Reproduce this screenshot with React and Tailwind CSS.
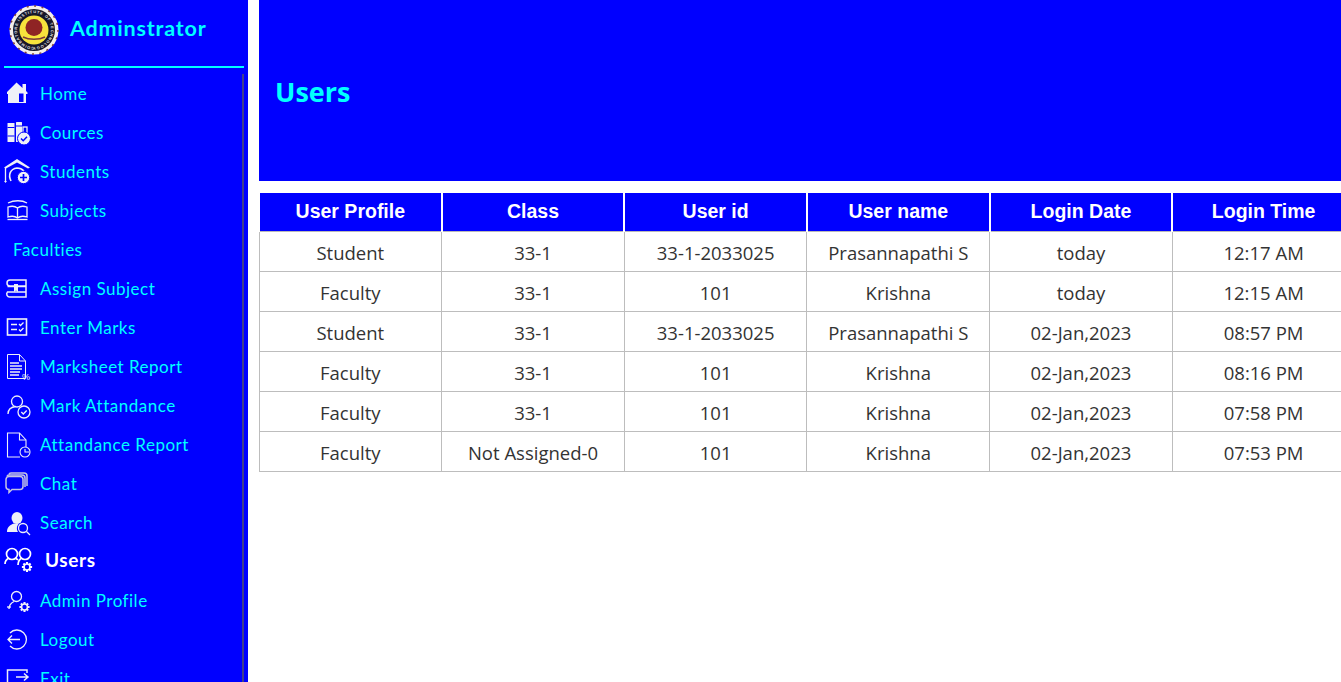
import React from 'react';

const cyan = 'text-[#00ffff]';

// sidebar icons, all drawn on a 28x28 box
const ink = '#eef0f8';
const svgProps = { width: 28, height: 28, viewBox: '0 0 28 28', fill: 'none', stroke: ink, strokeWidth: 1.3 };

const HomeIcon = () => (
  <svg {...svgProps}>
    <path d="M3 12 12.500 2.500l6 5.500V4H22v7l1.500 1.500V14H22v9H4V14H3z" fill={ink} stroke="none" />
    <rect x="15" y="13.500" width="4.500" height="8.500" fill="#0000ff" stroke="none" />
  </svg>
);
const CoursesIcon = () => (
  <svg {...svgProps}>
    <rect x="3.500" y="4" width="7" height="19" rx="0.5" fill={ink} stroke="none" />
    <rect x="12" y="3" width="6" height="20" rx="0.5" fill={ink} stroke="none" />
    <rect x="19" y="8" width="4" height="7" fill="none" />
    <path d="M3.500 8.500h7M3.500 17h7M12 7h6" stroke="#0000ff" strokeWidth="1" />
    <circle cx="20" cy="19.500" r="6.500" fill={ink} stroke="#0000ff" strokeWidth="1" />
    <path d="m17 19.500 2.200 2.200 3.800-4" stroke="#0000ff" strokeWidth="1.500" />
  </svg>
);
const StudentsIcon = () => (
  <svg {...svgProps}>
    <path d="M13 1 0 9.500l2 1 11-6 11 6 2-1z" fill={ink} stroke="none" />
    <path d="M1.500 10v13" />
    <path d="M7 23C4 17 6 11 13 10c3 0 5 1 7 3" strokeWidth="1.600" />
    <path d="M0 23h3l-1.500 2z" fill={ink} stroke="none" />
    <circle cx="19.500" cy="19.500" r="6.200" fill={ink} stroke="#0000ff" strokeWidth="1" />
    <path d="M19.500 16v7M16 19.500h7" stroke="#0000ff" strokeWidth="1.700" />
  </svg>
);
const SubjectsIcon = () => (
  <svg {...svgProps}>
    <path d="M4 6c6-3 14-3 19 0" />
    <path d="M4 10c3-1 7-1 9.500 1 2.500-2 6.500-2 9.500-1v10c-3-1-7-1-9.500 1C11 19 7 19 4 20zM13.500 11v10" />
    <path d="M3.500 22.500h20" />
  </svg>
);
const AssignIcon = () => (
  <svg {...svgProps}>
    <path d="M6 5h16v6H6a3 3 0 0 1 0-6zM6 11h15M3.500 17h18.500v5H6a3 3 0 0 1-2.500-5zM3.500 11.500H22v5.500" strokeWidth="1.500" />
    <path d="M10 9h4v8l-2-1.500-2 1.500z" fill={ink} stroke="none" />
  </svg>
);
const MarksIcon = () => (
  <svg {...svgProps}>
    <rect x="3.500" y="5" width="19" height="16" strokeWidth="1.600" />
    <path d="M7 10.500h6M7 15.500h6" strokeWidth="1.500" />
    <path d="m15 10 1.500 1.500 3-3M15 15.500l1.500 1.500 3-3" />
  </svg>
);
const SheetIcon = () => (
  <svg {...svgProps} strokeWidth="1">
    <path d="M3.500 1.500h12l6 6.500v17.500h-18z" />
    <path d="M15.500 1.500V8h6" />
    <path d="M6 10h9M6 13h12M6 16h12M6 19h10M6 22h9" strokeWidth="1.300" />
    <text x="18" y="27" fontFamily="Liberation Sans, sans-serif" fontSize="9" fill={ink} stroke="none">%</text>
  </svg>
);
const AttendIcon = () => (
  <svg {...svgProps}>
    <circle cx="13" cy="9.500" r="5.500" />
    <path d="M4 22c0-4 3-7 8-7.500" />
    <circle cx="20" cy="20" r="6" />
    <path d="m17.300 20 2 2 3.400-3.500" />
  </svg>
);
const ReportIcon = () => (
  <svg {...svgProps} strokeWidth="1.100">
    <path d="M16 26H3.500V2h12l6.500 7v7" />
    <path d="M15.500 2v7H22" />
    <circle cx="21" cy="21" r="5" />
    <path d="M21 18v3h4" />
  </svg>
);
const ChatIcon = () => (
  <svg {...svgProps} stroke="#c4c4e4" strokeWidth="1.500">
    <path d="M5 4.500a2 2 0 0 1 2-1.500h13a3 3 0 0 1 3 3v10" />
    <path d="M3 6.500a2 2 0 0 1 2-1.500h13a3 3 0 0 1 3 3v9" />
    <path d="M5 6.500h11a3 3 0 0 1 3 3v7a3 3 0 0 1-3 3H8l-3 3v-3a3 3 0 0 1-3-3v-7a3 3 0 0 1 3-3z" />
  </svg>
);
const SearchIcon = () => (
  <svg {...svgProps}>
    <ellipse cx="13" cy="9" rx="5.500" ry="6" fill={ink} stroke="none" />
    <path d="M3 23c0-5 3-7 7-8.500h5c-2 2-3 5-1 8.500z" fill={ink} stroke="none" />
    <circle cx="19" cy="19" r="4.500" />
    <path d="m22.500 22.500 3.500 3.500" />
  </svg>
);
const Gear = ({ x, y, r }) => (
  <g transform={`translate(${x} ${y})`}>
    <circle r={r} strokeWidth={r * 0.55} />
    <path
      d={`M0 ${-r * 1.7}V${-r}M0 ${r}V${r * 1.7}M${-r * 1.7} 0H${-r}M${r} 0H${r * 1.7}M${-r * 1.2} ${-r * 1.2}L${-r * 0.7} ${-r * 0.7}M${r * 1.2} ${r * 1.2}L${r * 0.7} ${r * 0.7}M${-r * 1.2} ${r * 1.2}L${-r * 0.7} ${r * 0.7}M${r * 1.2} ${-r * 1.2}L${r * 0.7} ${-r * 0.7}`}
      strokeWidth={r * 0.7}
    />
  </g>
);
const UsersIcon = () => (
  <svg width="32" height="32" viewBox="0 0 32 32" fill="none" stroke="#ffffff" strokeWidth="1.700">
    <circle cx="9" cy="9" r="5.500" />
    <path d="M2 19c0-3 2-5 4-6M12 13c1 .5 2 1 3 2" />
    <circle cx="22" cy="9" r="5.500" />
    <path d="M15 20c0-3 2-6 4-7M25 13.500h1" />
    <Gear x={24} y={22} r={3} />
  </svg>
);
const AdminIcon = () => (
  <svg {...svgProps}>
    <circle cx="12.500" cy="9.500" r="5" />
    <path d="M5 22c0-3 2-6 5-7.500" />
    <path d="M3 20h4" />
    <Gear x={20.500} y={20} r={3} />
  </svg>
);
const LogoutIcon = () => (
  <svg {...svgProps}>
    <path d="M6 7a9.500 9.500 0 1 1 0 13" />
    <path d="M4 13.500h12M8 9.500l-4 4 4 4" />
  </svg>
);
const ExitIcon = () => (
  <svg {...svgProps} strokeWidth="1.500">
    <path d="M23 8V5H3.500v17h9M8 26h9M12.500 22v4" />
    <path d="M12 12h12M20 8.500l4 3.500-4 3.500" />
  </svg>
);

const Logo = () => (
  <svg width="50" height="50" viewBox="0 0 50 50" className="shrink-0">
    <circle cx="25" cy="25" r="24.500" fill="#f4efe9" />
    <circle cx="25" cy="25" r="24" fill="none" stroke="#7c3b3b" strokeWidth="1.500" strokeDasharray="2 5.500" />
    <circle cx="25" cy="25" r="21" fill="#17172a" />
    <path id="logoRing" d="M25 42a17 17 0 1 1 .01 0" fill="none" />
    <text fontSize="3.800" fontWeight="700" letterSpacing="0.8" fill="#e8e8e8" fontFamily="Liberation Sans, sans-serif">
      <textPath href="#logoRing">COIMBATORE INSTITUTE OF TECHNOLOGY</textPath>
    </text>
    <circle cx="25" cy="25" r="14.500" fill="#f7e33c" />
    <circle cx="25" cy="22.500" r="8.500" fill="#8f2424" />
    <path d="M14 32c6 3 16 3 22 0" fill="none" stroke="#7c3b3b" strokeWidth="1.500" />
  </svg>
);

const navItems = [
  { label: 'Home', icon: <HomeIcon /> },
  { label: 'Cources', icon: <CoursesIcon /> },
  { label: 'Students', icon: <StudentsIcon /> },
  { label: 'Subjects', icon: <SubjectsIcon /> },
  { label: 'Faculties', icon: null },
  { label: 'Assign Subject', icon: <AssignIcon /> },
  { label: 'Enter Marks', icon: <MarksIcon /> },
  { label: 'Marksheet Report', icon: <SheetIcon /> },
  { label: 'Mark Attandance', icon: <AttendIcon /> },
  { label: 'Attandance Report', icon: <ReportIcon /> },
  { label: 'Chat', icon: <ChatIcon /> },
  { label: 'Search', icon: <SearchIcon /> },
  { label: 'Users', icon: <UsersIcon />, active: true },
  { label: 'Admin Profile', icon: <AdminIcon /> },
  { label: 'Logout', icon: <LogoutIcon /> },
  { label: 'Exit', icon: <ExitIcon /> },
];

const columns = ['User Profile', 'Class', 'User id', 'User name', 'Login Date', 'Login Time'];

const rows = [
  ['Student', '33-1', '33-1-2033025', 'Prasannapathi S', 'today', '12:17 AM'],
  ['Faculty', '33-1', '101', 'Krishna', 'today', '12:15 AM'],
  ['Student', '33-1', '33-1-2033025', 'Prasannapathi S', '02-Jan,2023', '08:57 PM'],
  ['Faculty', '33-1', '101', 'Krishna', '02-Jan,2023', '08:16 PM'],
  ['Faculty', '33-1', '101', 'Krishna', '02-Jan,2023', '07:58 PM'],
  ['Faculty', 'Not Assigned-0', '101', 'Krishna', '02-Jan,2023', '07:53 PM'],
];

const Sidebar = () => (
  <aside className="w-[248px] h-full shrink-0 bg-[#0000ff] overflow-hidden font-['Lato',sans-serif]">
    <div className="flex items-center h-[66px] pl-[9px] pb-[6px] gap-[11px]">
      <Logo />
      <span className={`mb-1 text-[21.500px] font-bold tracking-[0.8px] ${cyan}`}>Adminstrator</span>
    </div>
    <div className="h-[2px] w-[240px] ml-1 bg-[#00ffff]" />
    <nav className="w-[244px] h-full mt-[6px] border-r-2 border-[#40408c]">
      {navItems.map((item) => (
        <div key={item.label} className={`flex items-center h-[39px] ${item.active ? '-mt-px mb-px' : ''}`}>
          {item.icon ? (
            <span className={`flex justify-center shrink-0 ${item.active ? 'w-[38px]' : 'w-[28px] ml-[4px] mr-[8px]'}`}>{item.icon}</span>
          ) : (
            <span className="w-[13px] shrink-0" />
          )}
          <span
            className={
              item.active
                ? 'ml-[7px] text-[19px] font-bold text-white tracking-[0.6px]'
                : `text-[17px] tracking-[0.5px] ${cyan}`
            }
          >
            {item.label}
          </span>
        </div>
      ))}
    </nav>
  </aside>
);

const UsersTable = () => (
  <table className="mt-3 -ml-px w-[1098px] table-fixed border-collapse">
    <thead>
      <tr className="h-[38px] bg-[#0000ff] text-white font-['Liberation_Sans',sans-serif] text-[19.500px]">
        {columns.map((col) => (
          <th key={col} className="border-x-2 border-x-white border-b border-b-[#b9b9b9] font-bold text-center">
            {col}
          </th>
        ))}
      </tr>
    </thead>
    <tbody>
      {rows.map((row, i) => (
        <tr key={i} className="h-10 font-['Open_Sans',sans-serif] text-[18.500px] text-[#333333]">
          {row.map((cell, j) => (
            <td key={j} className="border border-[#bdbdbd] text-center pt-[3px]">
              {cell}
            </td>
          ))}
        </tr>
      ))}
    </tbody>
  </table>
);

const App = () => (
  <div className="flex w-full h-screen overflow-hidden bg-white">
    <Sidebar />
    <main className="flex-1 min-w-0 ml-[11px] overflow-hidden">
      <div className="h-[181px] flex items-center pl-4 pt-[3px] bg-[#0000ff]">
        <h1 className={`text-[27px] font-bold font-['Open_Sans',sans-serif] ${cyan}`}>Users</h1>
      </div>
      <UsersTable />
    </main>
  </div>
);

export default App;
